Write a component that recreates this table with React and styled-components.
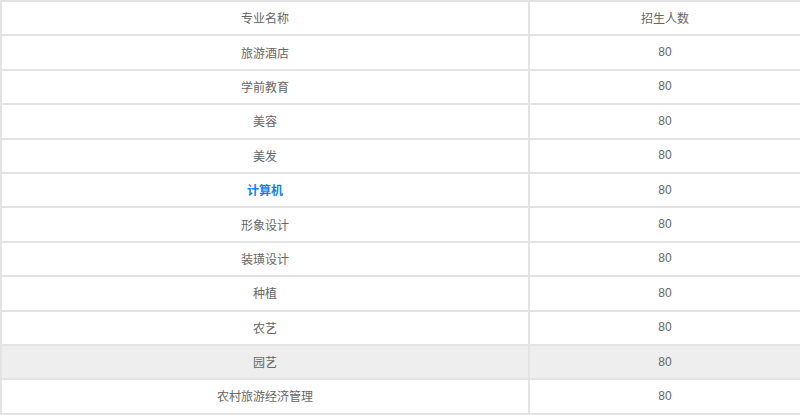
import React from 'react';
import styled, { createGlobalStyle } from 'styled-components';

const GlobalStyle = createGlobalStyle`
  html, body {
    margin: 0;
    padding: 0;
    background: #fff;
    overflow: hidden;
  }
  body {
    font-family: "Liberation Sans", "Noto Sans CJK SC", sans-serif;
  }
`;

const Table = styled.table`
  width: calc(100% + 2px);
  border-collapse: collapse;
  border: 2px solid #e3e3e3;
  font-size: 12px;
  color: #666;
`;

const Row = styled.tr`
  background: ${(p) => (p.$shaded ? '#eeeeee' : '#fff')};
`;

const Cell = styled.td`
  border: 2px solid #e3e3e3;
  height: 31.4px;
  padding: 0 0 1px;
  text-align: center;
  vertical-align: middle;
  color: ${(p) => (p.$active ? '#1a7cf2' : '#666')};
  font-weight: ${(p) => (p.$active ? 'bold' : 'normal')};
`;

const NameCell = styled(Cell)`
  width: 66%;
`;

const majors = [
  { name: '旅游酒店', count: 80 },
  { name: '学前教育', count: 80 },
  { name: '美容', count: 80 },
  { name: '美发', count: 80 },
  { name: '计算机', count: 80, active: true },
  { name: '形象设计', count: 80 },
  { name: '装璜设计', count: 80 },
  { name: '种植', count: 80 },
  { name: '农艺', count: 80 },
  { name: '园艺', count: 80, shaded: true },
  { name: '农村旅游经济管理', count: 80 },
];

const App = () => (
  <>
    <GlobalStyle />
    <Table>
      <tbody>
        <Row>
          <NameCell>专业名称</NameCell>
          <Cell>招生人数</Cell>
        </Row>
        {majors.map((m) => (
          <Row key={m.name} $shaded={m.shaded}>
            <NameCell $active={m.active}>{m.name}</NameCell>
            <Cell>{m.count}</Cell>
          </Row>
        ))}
      </tbody>
    </Table>
  </>
);

export default App;
